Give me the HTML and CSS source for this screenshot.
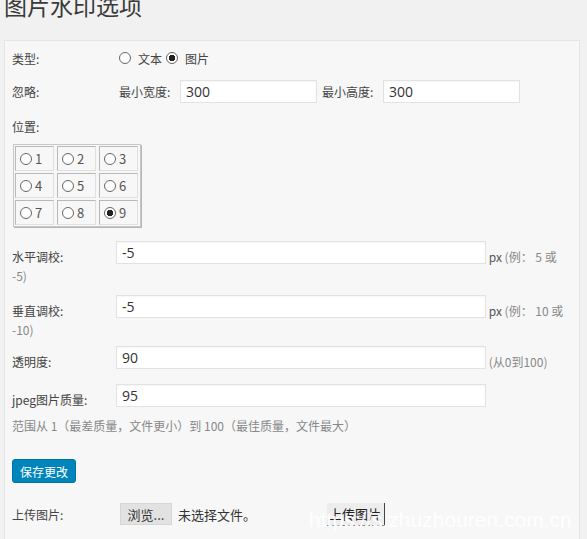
FILE: index.html
```html
<!DOCTYPE html>
<html lang="zh-CN">
<head>
    <meta charset="UTF-8">
    <meta name="viewport" content="width=device-width, initial-scale=1.0">
    <title>图片水印选项</title>
    <link rel="stylesheet" href="styles.css">
</head>
<body>
    <h1 class="page-title">图片水印选项</h1>
    <div class="panel">
        <div class="row">
            <span class="label">类型:</span>
            <label class="radio"><input type="radio" name="wm_type"> 文本</label>
            <label class="radio"><input type="radio" name="wm_type" checked> 图片</label>
        </div>
        <div class="row row-size">
            <span class="label">忽略:</span>
            <span class="sub-label">最小宽度:</span>
            <input type="text" class="text-input small" value="300">
            <span class="sub-label second">最小高度:</span>
            <input type="text" class="text-input small" value="300">
        </div>
        <div class="row row-pos"><span class="label">位置:</span></div>
        <div class="pos-grid">
            <label class="pos-cell"><input type="radio" name="wm_pos">1</label>
            <label class="pos-cell"><input type="radio" name="wm_pos">2</label>
            <label class="pos-cell"><input type="radio" name="wm_pos">3</label>
            <label class="pos-cell"><input type="radio" name="wm_pos">4</label>
            <label class="pos-cell"><input type="radio" name="wm_pos">5</label>
            <label class="pos-cell"><input type="radio" name="wm_pos">6</label>
            <label class="pos-cell"><input type="radio" name="wm_pos">7</label>
            <label class="pos-cell"><input type="radio" name="wm_pos">8</label>
            <label class="pos-cell"><input type="radio" name="wm_pos" checked>9</label>
        </div>

        <div class="flow-row offset-x">
            <span class="label">水平调校:</span><input type="text" class="text-input wide" value="-5"> <span class="hint"><b>px</b> (例： 5 或 -5)</span>
        </div>
        <div class="flow-row offset-y">
            <span class="label">垂直调校:</span><input type="text" class="text-input wide" value="-5"> <span class="hint"><b>px</b> (例： 10 或 -10)</span>
        </div>
        <div class="flow-row opacity">
            <span class="label">透明度:</span><input type="text" class="text-input wide" value="90"> <span class="hint">(从0到100)</span>
        </div>
        <div class="flow-row quality">
            <span class="label">jpeg图片质量:</span><input type="text" class="text-input wide" value="95">
        </div>
        <p class="description">范围从 1（最差质量，文件更小）到 100（最佳质量，文件最大）</p>

        <button type="button" class="btn-primary">保存更改</button>

        <div class="row row-upload">
            <span class="label">上传图片:</span>
            <span class="file-btn">浏览...</span>
            <span class="file-name">未选择文件。</span>
            <span class="upload-btn">上传图片</span>
        </div>
        <!-- 图片水印 -->
        <span class="watermark">https://s.zhuzhouren.com.cn</span>
    </div>
</body>
</html>
```

FILE: styles.css
```css
body {
    margin: 0;
    height: 100vh;
    background-color: #f1f1f1;
    font-family: "Noto Sans CJK SC", "Open Sans", sans-serif;
    font-size: 12px;
    color: #444;
    overflow: hidden;
}
.page-title {
    margin: -12px 0 0 4px;
    font-size: 23px;
    font-weight: normal;
    line-height: 34px;
    color: #3a3a3a;
}
.panel {
    position: relative;
    box-sizing: border-box;
    margin: 18px 0 0 4px;
    width: 576px;
    height: calc(100vh - 40px);
    padding: 5px 8px 0 7px;
    background-color: #f7f7f7;
    border: 1px solid #e4e4e4;
    border-bottom: none;
    overflow: hidden;
}
.row {
    display: flex;
    align-items: center;
    height: 24px;
}
.label {
    display: inline-block;
    width: 104px;
    flex-shrink: 0;
}
.radio {
    display: inline-flex;
    align-items: center;
    margin-left: 3px;
    margin-right: 1px;
}
input[type="radio"] {
    appearance: none;
    width: 12px;
    height: 12px;
    margin: 0 7px 0 0;
    border: 1px solid #666;
    border-radius: 50%;
    background: #fff;
}
input[type="radio"]:checked {
    background: radial-gradient(circle, #222 0 3px, #fff 3.5px);
}
.row-size {
    margin-top: 10px;
    height: 23px;
}
.sub-label {
    margin-left: 3px;
    width: 61px;
}
.sub-label.second {
    margin-left: 5px;
}
.text-input {
    box-sizing: border-box;
    height: 23px;
    padding: 0 5px;
    border: 1px solid #e2e2e2;
    background: #fff;
    box-shadow: inset 0 1px 2px rgba(0, 0, 0, 0.04);
    font-family: "Open Sans", "Noto Sans CJK SC", sans-serif;
    font-size: 14px;
    color: #333;
    outline: none;
}
.text-input.small {
    width: 137px;
}
.text-input.wide {
    width: 370px;
    vertical-align: 4px;
}
.row-pos {
    margin-top: 11px;
}
.pos-grid {
    display: inline-grid;
    grid-template-columns: repeat(3, 39px);
    grid-auto-rows: 25px;
    gap: 2px 3px;
    margin: 6px 0 0 1px;
    padding: 1px 2px 1px 1px;
    border: 1px solid #c8c8c8;
    box-shadow: 1px 1px 0 #b5b5b5;
}
.pos-cell {
    display: flex;
    align-items: center;
    padding-left: 4px;
    border: 1px solid #b8b8b8;
    border-right-color: #e0e0e0;
    border-bottom-color: #e0e0e0;
    font-size: 13px;
    color: #555;
}
.pos-cell input[type="radio"] {
    margin-right: 3px;
}
.flow-row {
    line-height: 19px;
}
.flow-row.offset-x {
    margin-top: 14px;
}
.flow-row.offset-y {
    margin-top: 10px;
}
.flow-row.opacity {
    margin-top: 7px;
}
.flow-row.quality {
    margin-top: 13px;
}
.hint {
    color: #888;
}
.hint b {
    font-weight: normal;
    color: #555;
}
.description {
    margin: 8px 0 0;
    color: #888;
}
.btn-primary {
    display: block;
    margin-top: 25px;
    width: 64px;
    height: 24px;
    padding: 0;
    border: 1px solid #0073aa;
    border-radius: 3px;
    background-color: #0085ba;
    color: #fff;
    font-family: inherit;
    font-size: 12px;
}
.row-upload {
    margin-top: 20px;
    height: 22px;
}
.file-btn {
    display: inline-flex;
    align-items: center;
    justify-content: center;
    width: 52px;
    height: 22px;
    margin-left: 4px;
    box-sizing: border-box;
    border: 1px solid #d6d6d6;
    background: #e2e2e2;
    font-size: 13px;
    color: #333;
}
.file-name {
    margin-left: 6px;
    font-size: 13px;
    color: #333;
}
.upload-btn {
    display: inline-flex;
    align-items: center;
    margin-left: 71px;
    height: 22px;
    padding: 0 3px 0 2px;
    background: #ededed;
    border-right: 1px solid #444;
    border-bottom: 1px dashed #888;
    font-size: 13px;
    color: #222;
}
.watermark {
    position: absolute;
    left: 304px;
    top: 467px;
    font-family: "Liberation Sans", Arial, sans-serif;
    font-size: 21px;
    color: rgba(255, 255, 255, 0.9);
    white-space: nowrap;
}
```
